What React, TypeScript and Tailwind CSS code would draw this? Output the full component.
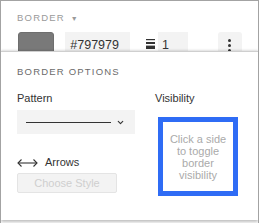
import { ChevronDown } from "lucide-react";

const font = { fontFamily: '"Liberation Sans", Arial, sans-serif' };

function LineWidthIcon() {
  return (
    <svg width="9" height="10" viewBox="0 0 9 10" className="shrink-0">
      <rect x="0" y="0" width="9" height="1.2" fill="#333" />
      <rect x="0" y="3" width="9" height="2" fill="#333" />
      <rect x="0" y="6.6" width="9" height="3.4" fill="#333" />
    </svg>
  );
}

function ArrowsIcon() {
  return (
    <svg width="21" height="10" viewBox="0 0 21 10" fill="none" stroke="#333" strokeWidth="1.1">
      <path d="M1 5h19" />
      <path d="M4.5 1.5L1 5l3.5 3.5" />
      <path d="M16.5 1.5L20 5l-3.5 3.5" />
    </svg>
  );
}

export default function App() {
  return (
    <div
      className="relative w-[259px] h-[223px] overflow-hidden bg-[#d6d6d6] border-x border-t border-[#a3a3a3]"
      style={font}
    >
      {/* header */}
      <div className="bg-white h-full px-[16px] pt-[11px]">
        <div className="flex items-center gap-[6px] text-[9.5px] leading-[12px] tracking-[1.2px] text-[#9a9a9a]">
          BORDER
          <span className="text-[7px] leading-none">▼</span>
        </div>
        <div className="mt-[8px] flex items-start">
          <div className="ml-[1px] w-[37px] h-[24px] rounded-[3px] bg-[#797979] border border-[#6e6e6e]" />
          <div className="ml-[11px] w-[66px] h-[24px] bg-[#f3f3f3] pl-[5px] pt-[6px] text-[12.5px] leading-[14px] text-[#333]">
            #797979
          </div>
          <div className="ml-[16px] pt-[7px]">
            <LineWidthIcon />
          </div>
          <div className="ml-[3px] w-[30px] h-[24px] bg-[#f3f3f3] pl-[4px] pt-[6px] text-[12.5px] leading-[14px] text-[#333]">
            1
          </div>
          <div className="ml-[30px] w-[25px] h-[24px] rounded-[3px] bg-[#f3f3f3] flex flex-col items-center pt-[7px] gap-[2.5px]">
            <span className="w-[2.5px] h-[2.5px] rounded-full bg-[#333]" />
            <span className="w-[2.5px] h-[2.5px] rounded-full bg-[#333]" />
            <span className="w-[2.5px] h-[2.5px] rounded-full bg-[#333]" />
          </div>
        </div>
      </div>

      {/* popover */}
      <div className="absolute left-0 right-0 top-[50px] h-[169px] bg-white border-t border-[#cfcfcf] shadow-[0_-1px_2px_rgba(0,0,0,0.12),0_2px_3px_rgba(0,0,0,0.25)] px-[16px] pt-[14px]">
        <div className="text-[9.5px] leading-[12px] tracking-[1.2px] text-[#6b6b6b]">BORDER OPTIONS</div>
        <div className="mt-[14px] flex">
          <div className="w-[118px]">
            <div className="text-[11px] leading-[13px] text-[#333]">Pattern</div>
            <div className="mt-[5px] h-[24px] bg-[#f3f3f3] flex items-center pl-[9px] pr-[10px]">
              <div className="w-[85px] h-px bg-[#333]" />
              <ChevronDown className="ml-auto w-[9px] h-[9px] text-[#333]" strokeWidth={3} />
            </div>
            <div className="mt-[22px] flex items-center h-[13px]">
              <ArrowsIcon />
              <span className="ml-[7px] text-[11px] leading-[13px] text-[#333]">Arrows</span>
            </div>
            <div className="mt-[4px] w-[100px] h-[20px] rounded-[2px] bg-[#f3f3f3] border border-[#e4e4e4] flex items-center justify-center text-[11px] text-[#cfcfcf]">
              Choose Style
            </div>
          </div>
          <div className="ml-[20px]">
            <div className="text-[11px] leading-[13px] text-[#333]">Visibility</div>
            <div className="mt-[12px] ml-[3px] w-[80px] h-[79px] border-[5px] border-[#2f6cf5] flex items-center justify-center text-center text-[11px] leading-[12px] text-[#aaaaaa]">
              Click a side
              <br />
              to toggle
              <br />
              border
              <br />
              visibility
            </div>
          </div>
        </div>
      </div>
    </div>
  );
}
